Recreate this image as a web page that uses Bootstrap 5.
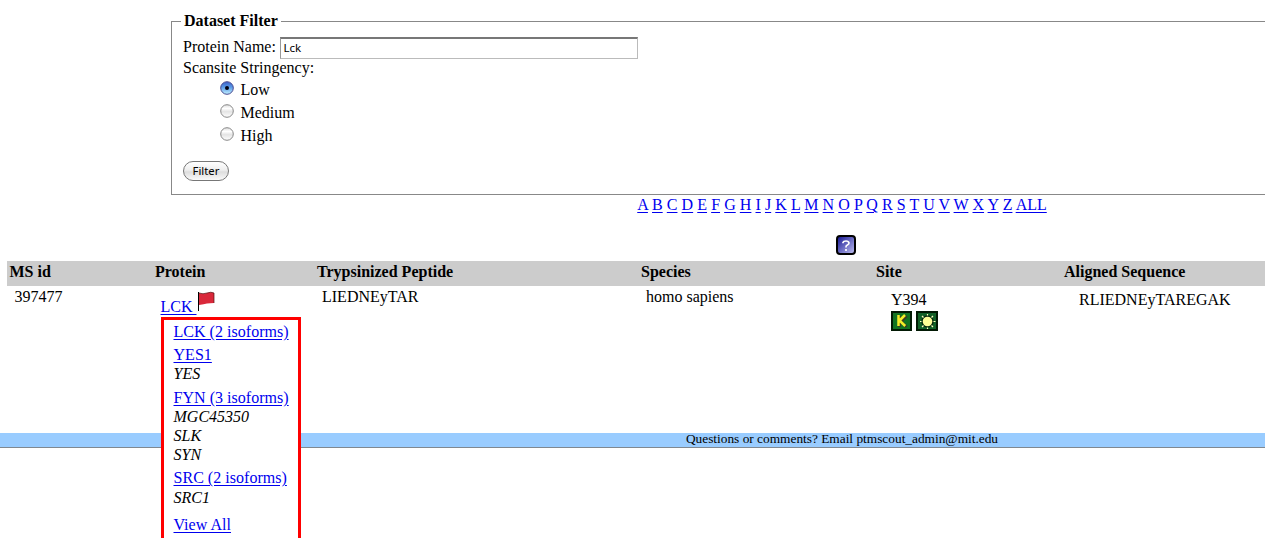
<!DOCTYPE html>
<html lang="en">
<head>
<meta charset="utf-8">
<title>Dataset Filter</title>
<link href="https://cdn.jsdelivr.net/npm/bootstrap@5.3.0/dist/css/bootstrap.min.css" rel="stylesheet">
<style>
html,body{overflow:hidden;height:100%}
body{font:16px/21px "Liberation Serif",serif;color:#000;background:#fff}
a{color:#00e;text-underline-offset:2px}
.page-clip{height:538px;overflow:hidden}
.sheet{width:1684px}
.filter-box{padding:21px 171px 0;height:194px;position:relative}
.frame-line{border:1px solid #888;height:174px;padding:15px 11px 0}
.filter-title{position:absolute;left:181px;top:11px;padding:0 3px;background:#fff;font-weight:bold;line-height:20px}
.name-row{height:22px;margin-bottom:-2px}
.name-row span{margin-top:-4px}
.name-field{width:358px;height:22px;border:1px solid #bbb;border-top:2px solid #777;border-left-color:#999;border-radius:0;padding:0 2.5px 2px;font:11.5px "Noto Sans",sans-serif;color:#000;margin-left:4px}
.choice{height:23px;padding-left:37px}
.choice svg{margin-right:6.5px;margin-top:-4px}
.filter-btn{width:46px;height:20px;margin:14px 0 0;padding:0;border:1.5px solid #777;border-radius:10px;background:linear-gradient(#fff,#eee 45%,#ddd 55%,#fafafa);font:11.3px/16px "Noto Sans",sans-serif;color:#000}
.letters{height:21px;line-height:21px;word-spacing:.1px}
.help-row{height:46px;padding:20px 0 0 8px}
.data-grid{width:1670px;margin-left:7px;table-layout:fixed}
.data-grid th{background:#ccc;height:25px;padding:0 3px 3px;line-height:22px}
.data-grid th:first-child{padding-left:2.5px}
.data-grid td{vertical-align:top;padding:0 8px;height:147px}
.data-grid td:first-child{padding-left:7.5px}
.flag-row{padding:5px 0 0 .5px}
.flag-row a{margin-top:5px;white-space:pre}
.flag-row svg{margin-left:.5px}
.iso-menu{position:absolute;left:1px;top:31px;width:140px;height:260px;border:3px solid #f00;background:#fff;padding:0 9.5px;white-space:nowrap}
.iso-menu a,.iso-menu i{display:block}
.iso-menu a{line-height:23px;width:max-content;letter-spacing:.03px}
.iso-menu i{line-height:19px;position:relative;top:-2px}
.iso-menu i + a{margin-top:1px}
.iso-menu i + a.src-link{margin-top:0}
.iso-menu i.src-alias{top:-1px}
.iso-menu i + a.view-all{margin-top:5px}
.site-cell{padding:3px 0 0 10px}
.foot-bar{background:#9cf;border-bottom:1px solid #808890;height:15px;font-size:13.35px;line-height:12px}
</style>
</head>
<body>
<div class="page-clip">
<div class="sheet">
<div class="filter-box">
<div class="filter-title">Dataset Filter</div>
<div class="frame-line">
<div class="name-row d-flex align-items-center"><span>Protein Name:</span><input class="name-field" value="Lck"></div>
<div>Scansite Stringency:</div>
<div class="choice d-flex align-items-center"><svg width="14" height="14" viewBox="0 0 14 14"><defs><linearGradient id="b" x2="0" y2="1"><stop stop-color="#3a5fc8"/><stop offset=".45" stop-color="#5b9ce8"/><stop offset="1" stop-color="#c4f2ff"/></linearGradient><linearGradient id="g" x2="0" y2="1"><stop stop-color="#ddd"/><stop offset=".3" stop-color="#fff"/><stop offset=".55" stop-color="#e4e4e4"/><stop offset="1" stop-color="#fff"/></linearGradient></defs><circle cx="7" cy="7" r="6.3" fill="url(#b)" stroke="#4a4a90"/><circle cx="7" cy="7" r="2" fill="#001"/></svg>Low</div>
<div class="choice d-flex align-items-center"><svg width="14" height="14"><circle cx="7" cy="7" r="6.3" fill="url(#g)" stroke="#888"/></svg>Medium</div>
<div class="choice d-flex align-items-center"><svg width="14" height="14"><circle cx="7" cy="7" r="6.3" fill="url(#g)" stroke="#888"/></svg>High</div>
<button class="filter-btn d-block">Filter</button>
</div>
</div>
<div class="letters text-center"><a href="#">A</a> <a href="#">B</a> <a href="#">C</a> <a href="#">D</a> <a href="#">E</a> <a href="#">F</a> <a href="#">G</a> <a href="#">H</a> <a href="#">I</a> <a href="#">J</a> <a href="#">K</a> <a href="#">L</a> <a href="#">M</a> <a href="#">N</a> <a href="#">O</a> <a href="#">P</a> <a href="#">Q</a> <a href="#">R</a> <a href="#">S</a> <a href="#">T</a> <a href="#">U</a> <a href="#">V</a> <a href="#">W</a> <a href="#">X</a> <a href="#">Y</a> <a href="#">Z</a> <a href="#">ALL</a></div>
<div class="help-row d-flex justify-content-center"><svg width="20" height="20"><defs><linearGradient id="q" x2="1" y2="1"><stop offset=".1" stop-color="#22229a"/><stop offset="1" stop-color="#c4c4f4"/></linearGradient></defs><rect x="1" y="1" width="18" height="18" rx="3" fill="url(#q)" stroke="#000" stroke-width="2"/><path d="M7 8.200V7.400Q7.400 6 10 6t3 2q0 1.300-1.600 2T10 12v.6M10 14v2" fill="none" stroke="#fff" stroke-width="1.700"/></svg></div>
<table class="data-grid">
<colgroup><col style="width:145px"><col style="width:162px"><col style="width:324px"><col style="width:235px"><col style="width:188px"><col></colgroup>
<thead><tr><th>MS id</th><th>Protein</th><th>Trypsinized Peptide</th><th>Species</th><th>Site</th><th>Aligned Sequence</th></tr></thead>
<tbody><tr><td>397477</td>
<td><div class="position-relative"><div class="flag-row d-flex"><a href="#">LCK </a><svg width="18" height="20"><path d="M1.500 1v19" stroke="#000"/><path d="M2 2q4 1.500 8 0t7 0v10q-4 0-7 .5T2 14z" fill="#d9283a"/><path d="M2 2q4 1.500 8 0t7 0v10" fill="none" stroke="#511" stroke-width=".7"/></svg></div>
<div class="iso-menu"><a href="#">LCK (2 isoforms)</a><a href="#">YES1</a><i>YES</i><a href="#">FYN (3 isoforms)</a><i>MGC45350</i><i>SLK</i><i>SYN</i><a href="#" class="src-link">SRC (2 isoforms)</a><i class="src-alias">SRC1</i><a href="#" class="view-all">View All</a></div></div></td>
<td>LIEDNEyTAR</td><td>homo sapiens</td>
<td><div class="site-cell">Y394<div class="d-flex gap-1" style="margin-top:1px"><svg width="21" height="20"><path d="M0 0h21v20H0z" fill="#021a04"/><path d="M2 2h17v16H2z" fill="#117321"/><path d="M7.500 4v11M14.500 4 9 9.500l5.500 5.500" fill="none" stroke="#3c3b22" stroke-width="3" transform="translate(1 1)"/><path d="M7.500 4v11M14 4 8.500 9.500 14.200 15" fill="none" stroke="#f4ee28" stroke-width="2.500"/></svg><svg width="22" height="20"><path d="M0 0h22v20H0z" fill="#021a04"/><path d="M2 2h18v16H2z" fill="#126127"/><circle cx="11.500" cy="10.500" r="6.200" fill="#06280c"/><path d="M11.500 3v1.500M11.500 16.500v1.500M4 10.500h1.500M17.500 10.500h2M6 5l1.500 1.500M17 5l-1.500 1.500M6 16l1.500-1.500M17 16l-1.500-1.500" stroke="#ffffc0" stroke-width="1.200"/><circle cx="11.500" cy="10.500" r="4.800" fill="#ffff96"/></svg></div></div></td>
<td><div class="site-cell">RLIEDNEyTAREGAK</div></td></tr></tbody>
</table>
<div class="foot-bar text-center">Questions or comments? Email ptmscout_admin@mit.edu</div>
</div>
</div>
<script src="https://cdn.jsdelivr.net/npm/bootstrap@5.3.0/dist/js/bootstrap.bundle.min.js"></script>
</body>
</html>
